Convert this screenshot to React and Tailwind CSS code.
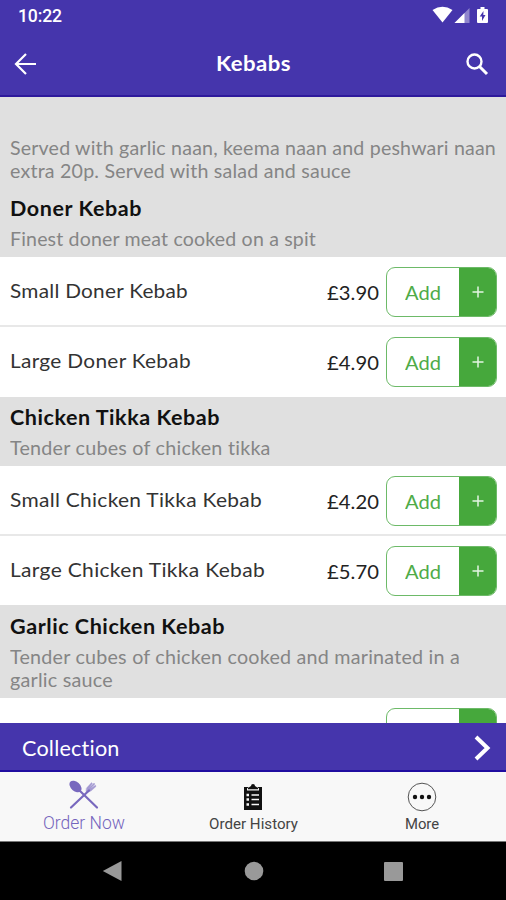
import { useLayoutEffect, useRef, useState } from "react";

// Single line of text that fills the given width, partly by wider glyphs
// and partly by tracking.
function FitText({ width, className = "", children }) {
  const ref = useRef(null);
  const [fit, setFit] = useState({ spacing: 0, scale: 1 });
  useLayoutEffect(() => {
    const natural = ref.current.getBoundingClientRect().width;
    const scale = Math.pow(width / natural, 0.6);
    setFit({ spacing: (width / scale - natural) / children.length, scale });
  }, []);
  return (
    <div className={"whitespace-nowrap " + className} style={{ width }}>
      <span
        ref={ref}
        className="inline-block origin-left"
        style={{ letterSpacing: fit.spacing + "px", transform: `scaleX(${fit.scale})` }}
      >
        {children}
      </span>
    </div>
  );
}

function SectionHeader({ title, titleWidth, lines, className = "" }) {
  return (
    <div className={"bg-[#e0e0e0] pl-[10px] " + className}>
      <FitText width={titleWidth} className="h-[31px] text-[20px] font-bold leading-[24px] text-[#111]">{title}</FitText>
      {lines.map(([text, w]) => (
        <FitText key={text} width={w} className="h-[23px] text-[19px] leading-[23px] text-[#858585]">{text}</FitText>
      ))}
    </div>
  );
}

function AddButton({ label = true }) {
  return (
    <div className="flex h-[50px] w-[111px] overflow-hidden rounded-[9px] border border-[#6dba68] bg-white">
      <div className="flex w-[72px] justify-center pt-[12px]">
        {label && <FitText width={36} className="text-[20px] leading-[24px] text-[#4fab48]">Add</FitText>}
      </div>
      <div className="flex flex-1 items-center justify-center bg-[#46a83c]">
        {label && (
          <svg width="12" height="12" viewBox="0 0 12 12" stroke="#e5f5e3" strokeWidth="1.500">
            <path d="M6 .5v11M.5 6h11" />
          </svg>
        )}
      </div>
    </div>
  );
}

function ItemRow({ name, width, price, divider, className = "" }) {
  return (
    <div className={"flex shrink-0 justify-between bg-white pl-[10px] pr-[9px] pt-[10px] " + (divider ? "border-b-2 border-[#e8e8e8] " : "") + className}>
      <FitText width={width} className="pt-[11px] text-[20px] leading-[24px] text-[#333]">{name}</FitText>
      <div className="flex">
        <FitText width={52} className="mr-[7px] pt-[13px] text-[20px] leading-[24px] text-[#222]">{price}</FitText>
        <AddButton />
      </div>
    </div>
  );
}

export default function App() {
  return (
    <div className="flex h-[900px] w-[506px] flex-col overflow-hidden bg-white font-['Lato','Liberation_Sans',sans-serif]">
      <header className="h-[97px] shrink-0 border-b-2 border-[#2e199c] bg-[#4535ac] text-white">
        <div className="flex h-[32px] justify-between pl-[18px] pr-[16px]">
          <FitText width={44} className="pt-[6px] font-['Roboto',sans-serif] text-[18px] font-medium leading-[20px]">10:22</FitText>
          <svg width="58" height="18" viewBox="0 0 58 18" className="mt-[6px]" fill="#fff">
            <path d="M.5 4Q10.500-2.500 20.500 4L10.500 16.500Z" />
            <path d="M22.500 17L37.500 2v15Z" opacity=".4" />
            <path d="M22.500 17L32.500 7v10Z" />
            <path d="M46 3h2.500V1h4v2H55q1 0 1 1v12q0 1-1 1h-9q-1 0-1-1V4q0-1 1-1Z" />
            <path d="M51.500 5L47.700 10.500h2.300V15l3.500-6h-2.200Z" fill="#4535ac" />
          </svg>
        </div>
        <div className="flex h-[63px] items-center justify-between pl-[14px] pr-[17px]">
          <svg width="23" height="22" viewBox="0 0 23 22" fill="none" stroke="#fff" strokeWidth="2.200">
            <path d="M22 11H2M12 1L2 11l10 10" />
          </svg>
          <FitText width={75} className="ml-[5px] pb-[1px] text-[21px] font-bold leading-[26px]">Kebabs</FitText>
          <svg width="24" height="24" viewBox="0 0 24 24" fill="none" stroke="#fff" strokeWidth="2.400">
            <circle cx="9.500" cy="9.500" r="7" />
            <path d="M14.500 14.500l7.500 7.500" strokeWidth="3" />
          </svg>
        </div>
      </header>

      <main className="h-[626px] shrink-0 overflow-hidden">
        <div className="h-[98px] bg-[#e0e0e0] pl-[10px] pt-[39px]">
          <FitText width={486} className="h-[23px] text-[19px] leading-[23px] text-[#858585]">Served with garlic naan, keema naan and peshwari naan</FitText>
          <FitText width={341} className="h-[23px] text-[19px] leading-[23px] text-[#858585]">extra 20p. Served with salad and sauce</FitText>
        </div>
        <SectionHeader className="h-[62px] pt-[1px]" title="Doner Kebab" titleWidth={132} lines={[["Finest doner meat cooked on a spit", 306]]} />
        <ItemRow className="h-[70px]" name="Small Doner Kebab" width={178} price="£3.90" divider />
        <ItemRow className="h-[70px]" name="Large Doner Kebab" width={181} price="£4.90" />
        <SectionHeader className="h-[69px] pt-[8px]" title="Chicken Tikka Kebab" titleWidth={210} lines={[["Tender cubes of chicken tikka", 261]]} />
        <ItemRow className="h-[70px]" name="Small Chicken Tikka Kebab" width={252} price="£4.20" divider />
        <ItemRow className="h-[69px]" name="Large Chicken Tikka Kebab" width={255} price="£5.70" />
        <SectionHeader
          className="h-[93px] pt-[9px]"
          title="Garlic Chicken Kebab"
          titleWidth={215}
          lines={[["Tender cubes of chicken cooked and marinated in a", 450], ["garlic sauce", 103]]}
        />
        <div className="flex h-[70px] justify-end bg-white pr-[9px] pt-[10px]">
          <AddButton label={false} />
        </div>
      </main>

      <div className="flex h-[49px] shrink-0 items-center justify-between border-b-2 border-[#200da0] bg-[#4535ac] pl-[22px] pr-[14px] text-white">
        <FitText width={98} className="pt-[2px] text-[21px] leading-[26px]">Collection</FitText>
        <svg width="19" height="26" viewBox="0 0 19 26" fill="none" stroke="#fff" strokeWidth="4" className="mt-[2px]">
          <path d="M3 2l11.500 11L3 24" />
        </svg>
      </div>

      <nav className="grid h-[70px] shrink-0 grid-cols-3 border-b border-[#777] bg-[#f8f8f8] font-['Roboto',sans-serif]">
        <div className="flex flex-col items-center pt-[8px]">
          <svg width="30" height="30" viewBox="0 0 30 30" fill="#7868be" stroke="#7868be" strokeLinecap="round">
            <path d="M10 10l18 17.500" strokeWidth="2.200" />
            <path d="M20 10.500L2 27.500" strokeWidth="2.200" />
            <ellipse cx="6.500" cy="6.500" rx="7" ry="4.600" transform="rotate(42 6.500 6.500)" stroke="none" />
            <path d="M17.500 8l5-5.500 1 1-3 4 4.500-4.500 1 1-4.500 4.500 5-3.500.5 1.500-5 4.500q-3 2-5 .5Z" strokeWidth=".3" opacity=".65" />
          </svg>
          <FitText width={82} className="mt-[3px] h-[20px] text-[17.500px] font-light leading-[20px] text-[#7464bd]">Order Now</FitText>
        </div>
        <div className="flex flex-col items-center pt-[11px]">
          <svg width="18" height="28" viewBox="0 0 18 28">
            <rect y="4" width="18" height="23" fill="#111" />
            <path d="M3 7.500V5.500L6 3h6l3 2.500v2Z" fill="#f8f8f8" />
            <path d="M4 6.300V5l3-2q0-2 2-2t2 2l3 2v1.300Z" fill="#111" />
            <path d="M2.500 12H5M2.500 16.500H5M2.500 21.500H5" stroke="#f8f8f8" strokeWidth="2.400" />
            <path d="M7.500 12H15M7.500 16.500H15M7.500 21.500H15" stroke="#f8f8f8" strokeWidth="1.600" />
          </svg>
          <FitText width={89} className="ml-[1px] mt-[3px] h-[20px] text-[15px] leading-[20px] text-[#444]">Order History</FitText>
        </div>
        <div className="flex flex-col items-center pt-[10px]">
          <svg width="30" height="30" viewBox="0 0 30 30">
            <circle cx="15" cy="15" r="13.800" fill="none" stroke="#555" />
            <circle cx="8" cy="15" r="2.200" fill="#111" />
            <circle cx="15" cy="15" r="2.200" fill="#111" />
            <circle cx="22" cy="15" r="2.200" fill="#111" />
          </svg>
          <FitText width={34} className="ml-[1px] mt-[2px] h-[20px] text-[15px] leading-[20px] text-[#444]">More</FitText>
        </div>
      </nav>

      <div className="flex h-[58px] items-start bg-black pl-[102px] pt-[18px]">
        <svg width="302" height="22" viewBox="0 0 302 22" fill="#999">
          <path d="M.8 11L19.500 1v20Z" />
          <circle cx="152" cy="11" r="9.300" />
          <rect x="282" y="2" width="19" height="19" rx="1" />
        </svg>
      </div>
    </div>
  );
}
